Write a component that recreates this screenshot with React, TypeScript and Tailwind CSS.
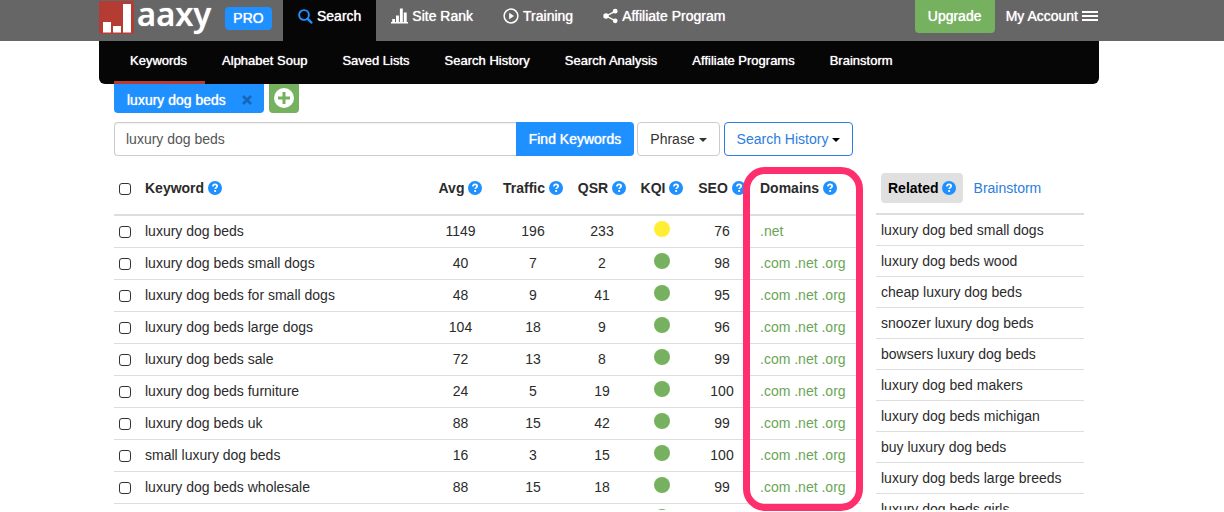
import { useState, type ReactNode } from "react";

const GLOW = "[text-shadow:0_0_1px_#fff]";

const SUB_NAV = [
  "Keywords",
  "Alphabet Soup",
  "Saved Lists",
  "Search History",
  "Search Analysis",
  "Affiliate Programs",
  "Brainstorm",
];

type Row = {
  keyword: string;
  avg: number;
  traffic: number;
  qsr: number;
  kqi: "yellow" | "green";
  seo: number;
  domains: string[];
};

const ALL = [".com", ".net", ".org"];

const ROWS: Row[] = [
  { keyword: "luxury dog beds", avg: 1149, traffic: 196, qsr: 233, kqi: "yellow", seo: 76, domains: [".net"] },
  { keyword: "luxury dog beds small dogs", avg: 40, traffic: 7, qsr: 2, kqi: "green", seo: 98, domains: ALL },
  { keyword: "luxury dog beds for small dogs", avg: 48, traffic: 9, qsr: 41, kqi: "green", seo: 95, domains: ALL },
  { keyword: "luxury dog beds large dogs", avg: 104, traffic: 18, qsr: 9, kqi: "green", seo: 96, domains: ALL },
  { keyword: "luxury dog beds sale", avg: 72, traffic: 13, qsr: 8, kqi: "green", seo: 99, domains: ALL },
  { keyword: "luxury dog beds furniture", avg: 24, traffic: 5, qsr: 19, kqi: "green", seo: 100, domains: ALL },
  { keyword: "luxury dog beds uk", avg: 88, traffic: 15, qsr: 42, kqi: "green", seo: 99, domains: ALL },
  { keyword: "small luxury dog beds", avg: 16, traffic: 3, qsr: 15, kqi: "green", seo: 100, domains: ALL },
  { keyword: "luxury dog beds wholesale", avg: 88, traffic: 15, qsr: 18, kqi: "green", seo: 99, domains: ALL },
];

const RELATED = [
  "luxury dog bed small dogs",
  "luxury dog beds wood",
  "cheap luxury dog beds",
  "snoozer luxury dog beds",
  "bowsers luxury dog beds",
  "luxury dog bed makers",
  "luxury dog beds michigan",
  "buy luxury dog beds",
  "luxury dog beds large breeds",
  "luxury dog beds girls",
];

const CHECKBOX =
  "block size-3 appearance-none rounded-[3px] border border-[#333] bg-white checked:bg-[#1e90ff]";

function LogoMark() {
  return (
    <svg width="35" height="34" viewBox="0 0 35 34" aria-hidden="true">
      <rect x="0" y="1" width="35" height="33" rx="2" fill="#b53c33" />
      <path d="M4 22h8v10.5H4zM14 26h8v6.5h-8zM24 4h8v28.5h-8z" fill="#fff" />
    </svg>
  );
}

function SearchIcon() {
  return (
    <svg width="15" height="15" viewBox="0 0 15 15" fill="none" stroke="#1e90ff" aria-hidden="true">
      <circle cx="6" cy="6" r="4.9" strokeWidth="1.9" />
      <path d="M9.8 9.9l3.5 3.6" strokeWidth="2.5" strokeLinecap="round" />
    </svg>
  );
}

function StatsIcon() {
  return (
    <svg width="17" height="16" viewBox="0 0 17 16" fill="currentColor" aria-hidden="true">
      <path d="M0 14h17v1.4H0zM1.2 11h2.8v3H1.2zM5 7.4h2.9V14H5zM8.9 0.6h2.9V14H8.9zM12.8 4.4h2.9V14h-2.9z" />
    </svg>
  );
}

function PlayIcon() {
  return (
    <svg width="16" height="16" viewBox="0 0 16 16" aria-hidden="true">
      <circle cx="8" cy="8" r="6.9" fill="none" stroke="currentColor" strokeWidth="1.5" />
      <path d="M6.2 4.8v6.4L11 8z" fill="currentColor" />
    </svg>
  );
}

function ShareIcon() {
  return (
    <svg width="15" height="16" viewBox="0 0 15 16" fill="currentColor" aria-hidden="true">
      <path d="M12.2 3.4L3.2 8l9 4.6" fill="none" stroke="currentColor" strokeWidth="1.4" />
      <circle cx="3" cy="8" r="2.7" />
      <circle cx="12.2" cy="3.2" r="2.4" />
      <circle cx="12.2" cy="12.8" r="2.4" />
    </svg>
  );
}

function MenuIcon() {
  return (
    <svg width="16" height="10" viewBox="0 0 16 10" fill="currentColor" aria-hidden="true">
      <path d="M0 0h16v2H0zM0 4h16v2H0zM0 8h16v2H0z" />
    </svg>
  );
}

function Help() {
  return (
    <svg width="14" height="14" viewBox="0 0 14 14" className="shrink-0" aria-hidden="true">
      <circle cx="7" cy="7" r="7" fill="#1e90ff" />
      <path
        d="M4.9 5.4C4.9 3.9 5.8 3.3 7 3.3s2.2.7 2.2 1.8c0 1.5-2 1.6-2 3"
        fill="none"
        stroke="#fff"
        strokeWidth="1.7"
      />
      <rect x="6.2" y="9.1" width="1.9" height="1.8" fill="#fff" />
    </svg>
  );
}

function Caret() {
  return <span className="mt-px border-x-4 border-t-4 border-x-transparent border-t-current" />;
}

function NavItem({ icon, label, active }: { icon: ReactNode; label: string; active?: boolean }) {
  return (
    <a
      href="#"
      className={`flex h-full items-center gap-1 px-[15px] pb-[9px] whitespace-nowrap ${GLOW} ${active ? "bg-[#060606]" : ""}`}
    >
      {icon}
      {label}
    </a>
  );
}

function HeadCell({ label }: { label: string }) {
  return (
    <th className="pt-1.5 align-top">
      <span className="flex items-center justify-center gap-1">
        {label}
        <Help />
      </span>
    </th>
  );
}

export default function App() {
  const [query, setQuery] = useState("luxury dog beds");

  return (
    <div className="flex h-screen flex-col overflow-hidden bg-white pb-0.5 font-['Liberation_Sans',Arial,sans-serif] text-sm leading-5 text-[#2b2b2b]">
      <header className="h-[41px] shrink-0 bg-[#666] pl-[99px] text-white">
        <div className="flex h-full max-w-[1000px] items-start">
          <a href="#" className="flex w-[126px] items-start gap-[3px]" aria-label="Jaaxy">
            <LogoMark />
            <span className={`font-['Open_Sans',sans-serif] text-[33px] leading-7 font-semibold ${GLOW}`}>aaxy</span>
          </a>
          <span className={`mt-[7px] mr-[11px] w-[47px] rounded bg-[#1e90ff] text-center leading-[23px] ${GLOW}`}>
            PRO
          </span>
          <nav className="flex h-full">
            <NavItem icon={<SearchIcon />} label="Search" active />
            <NavItem icon={<StatsIcon />} label="Site Rank" />
            <NavItem icon={<PlayIcon />} label="Training" />
            <NavItem icon={<ShareIcon />} label="Affiliate Program" />
          </nav>
          <button className={`ml-auto h-[33px] w-20 rounded-b bg-[#75b15f] pb-0.5 ${GLOW}`}>Upgrade</button>
          <button className={`mr-px ml-[11px] flex h-8 items-center gap-1 whitespace-nowrap ${GLOW}`}>
            My Account
            <MenuIcon />
          </button>
        </div>
      </header>

      <div className="flex min-h-0 max-w-[1099px] flex-1 flex-col pl-[99px]">
        <nav className="flex h-[43px] shrink-0 gap-px rounded-b-md bg-[#060606] pl-[15px] text-[13px] text-white">
          {SUB_NAV.map((item, i) => (
            <a
              key={item}
              href="#"
              className={`border-b-3 pt-2.5 pr-[18px] pl-4 whitespace-nowrap ${GLOW} ${i === 0 ? "border-[#b53c33]" : "border-transparent"}`}
            >
              {item}
            </a>
          ))}
        </nav>

        <div className="flex shrink-0 gap-[5px] px-[15px]">
          <div className="flex h-[29px] w-[150px] items-center justify-between rounded-b bg-[#1e90ff] pt-0.5 pr-3 pl-[13px] text-white">
            <span className={GLOW}>luxury dog beds</span>
            <button aria-label="Close tab">
              <svg width="10" height="10" viewBox="0 0 10 10" stroke="#1766b8" strokeWidth="2.6">
                <path d="M1 1l8 8M9 1L1 9" />
              </svg>
            </button>
          </div>
          <button
            aria-label="Add tab"
            className="flex h-[29px] w-[30px] items-center justify-center rounded-b bg-[#75b15f] pb-px"
          >
            <svg width="20" height="20" viewBox="0 0 20 20">
              <circle cx="10" cy="10" r="10" fill="#fff" />
              <path d="M10 4v12M4 10h12" stroke="#75b15f" strokeWidth="3" />
            </svg>
          </button>
        </div>

        <form className="mt-[9px] flex h-[34px] shrink-0 px-[15px]" onSubmit={(e) => e.preventDefault()}>
          <input
            aria-label="Keyword"
            value={query}
            onChange={(e) => setQuery(e.target.value)}
            className="w-[402px] rounded-l border border-r-0 border-[#ccc] px-[11px] text-[#555] inset-shadow-2xs"
          />
          <button className={`w-[118px] rounded-r bg-[#1e90ff] text-white ${GLOW}`}>Find Keywords</button>
          <button
            type="button"
            className="ml-[3px] flex w-[83px] items-center justify-center gap-1 rounded border border-[#ccc] text-[#333]"
          >
            Phrase <Caret />
          </button>
          <button
            type="button"
            className="ml-1 flex w-[129px] items-center justify-center gap-1 rounded border border-[#2a7de1] text-black"
          >
            <span className="text-[#2a7de1]">Search History</span> <Caret />
          </button>
        </form>

        <div className="flex min-h-0 flex-1 gap-[15px] px-[15px]">
          <div className="relative min-w-0 flex-1">
            <div className="h-full overflow-hidden pt-4">
              <table className="w-full table-fixed border-separate border-spacing-0">
                <colgroup>
                  <col className="w-[26px]" />
                  <col />
                  <col className="w-[73px]" />
                  <col className="w-[72px]" />
                  <col className="w-[66px]" />
                  <col className="w-[54px]" />
                  <col className="w-[66px]" />
                  <col className="w-[106px]" />
                </colgroup>
                <thead>
                  <tr className="h-11 [&>th]:border-b-2 [&>th]:border-[#ddd]">
                    <th className="pt-[11px] pl-[5px] align-top">
                      <input type="checkbox" aria-label="Select all keywords" className={CHECKBOX} />
                    </th>
                    <th className="pt-1.5 pl-[5px] align-top">
                      <span className="flex items-center gap-1">
                        Keyword
                        <Help />
                      </span>
                    </th>
                    <HeadCell label="Avg" />
                    <HeadCell label="Traffic" />
                    <HeadCell label="QSR" />
                    <HeadCell label="KQI" />
                    <HeadCell label="SEO" />
                    <th className="pt-1.5 pl-[5px] align-top">
                      <span className="flex items-center gap-1">
                        Domains
                        <Help />
                      </span>
                    </th>
                  </tr>
                </thead>
                <tbody>
                  {ROWS.map((row) => (
                    <tr
                      key={row.keyword}
                      className="h-8 text-center [&>td]:border-b [&>td]:border-[#ddd] [&>td]:pt-[5px] [&>td]:align-top"
                    >
                      <td className="pl-[5px]">
                        <input
                          type="checkbox"
                          aria-label={`Select ${row.keyword}`}
                          className={`mt-[5px] ${CHECKBOX}`}
                        />
                      </td>
                      <td className="pl-[5px] text-left">{row.keyword}</td>
                      <td>{row.avg}</td>
                      <td>{row.traffic}</td>
                      <td>{row.qsr}</td>
                      <td>
                        <span
                          className={`mx-auto block size-4 rounded-full ${row.kqi === "yellow" ? "bg-[#ffee33]" : "bg-[#75b15f]"}`}
                        />
                      </td>
                      <td>{row.seo}</td>
                      <td className="pl-[5px] text-left text-[#6aa556]">{row.domains.join(" ")}</td>
                    </tr>
                  ))}
                  <tr>
                    <td colSpan={5} />
                    <td className="pt-[5px]">
                      <span className="mx-auto block size-4 rounded-full bg-[#75b15f]" />
                    </td>
                    <td colSpan={2} />
                  </tr>
                </tbody>
              </table>
            </div>
            {/* Domains highlight */}
            <div className="pointer-events-none absolute top-[11px] -right-0.5 -bottom-px w-[120px] rounded-[22px] border-7 border-[#ff2f6e]" />
          </div>

          <aside className="w-52 shrink-0 overflow-hidden pt-4">
            <div className="flex h-[43px] items-start gap-[11px] border-b-2 border-[#ddd] pt-px pl-[5px]">
              <button className="flex h-[30px] items-center gap-[3px] rounded bg-[#e0e0e0] px-[7px] font-bold text-black">
                Related
                <Help />
              </button>
              <a href="#" className="leading-[30px] text-[#2a7de1]">
                Brainstorm
              </a>
            </div>
            <ul>
              {RELATED.map((item) => (
                <li key={item} className="h-[31px] border-b border-[#ddd] pl-[5px] leading-[30px] whitespace-nowrap">
                  {item}
                </li>
              ))}
            </ul>
          </aside>
        </div>
      </div>
    </div>
  );
}
